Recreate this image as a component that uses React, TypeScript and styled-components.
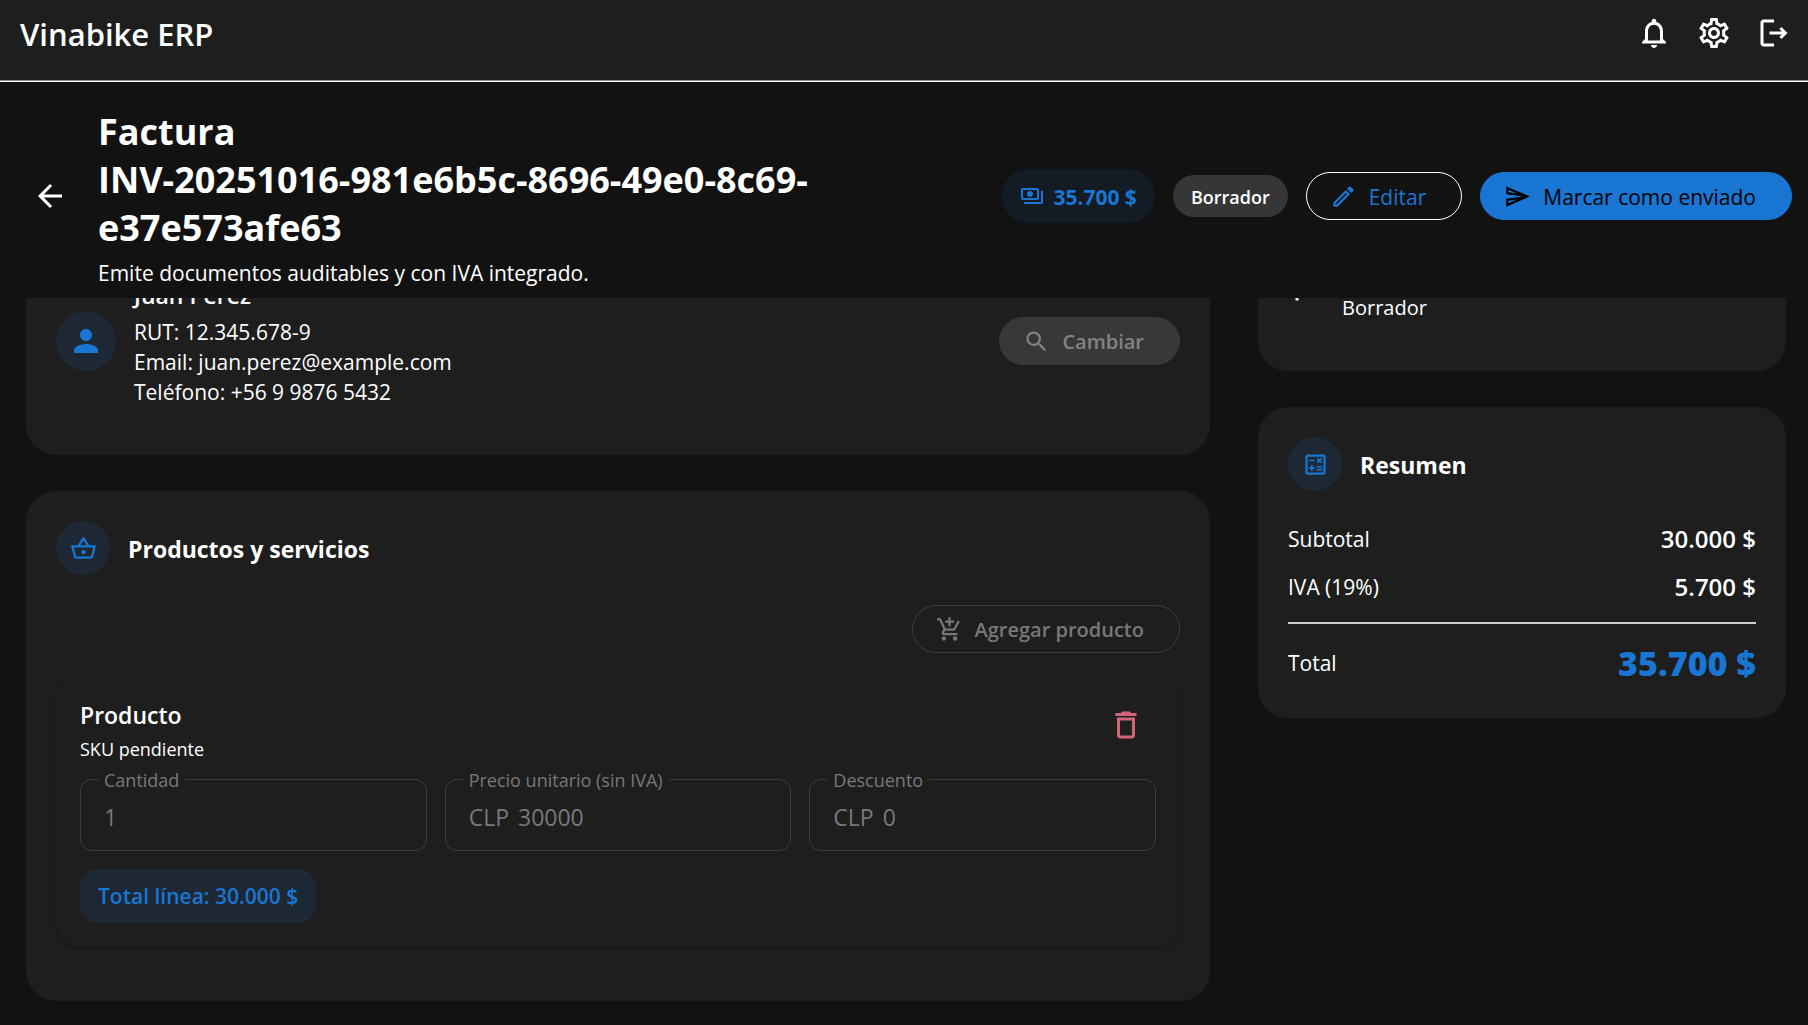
import React from "react";
import styled, { createGlobalStyle } from "styled-components";
import {
  MdArrowBack,
  MdDeleteOutline,
  MdNotificationsNone,
  MdOutlineAddShoppingCart,
  MdOutlineCalculate,
  MdOutlineEdit,
  MdOutlineFlag,
  MdOutlinePayments,
  MdOutlineSend,
  MdOutlineSettings,
  MdOutlineShoppingBasket,
  MdPerson,
  MdSearch,
} from "react-icons/md";

const color = {
  page: "#121212",
  surface: "#1e1e1e",
  primary: "#1976d2",
  tint: "rgba(25, 118, 210, 0.12)",
  text: "#ffffff",
  disabled: "#787878",
  disabledFill: "#383838",
  disabledLine: "#3e3e3e",
  danger: "#cf6679",
};

const GlobalStyle = createGlobalStyle`
  *, *::before, *::after { box-sizing: border-box; }
  body {
    margin: 0;
    background: ${color.page};
    color: ${color.text};
    font-family: "Open Sans", "Noto Sans", sans-serif;
    font-size: 21px;
    line-height: 30px;
  }
  button, input { font: inherit; }
  h1, h2, h3, p, dl, dt, dd { margin: 0; }
  svg { flex: none; display: block; }
`;

const Shell = styled.div`
  height: 100vh;
  display: flex;
  flex-direction: column;
  overflow: hidden;
`;

const AppBar = styled.header`
  flex: none;
  display: flex;
  align-items: flex-start;
  justify-content: space-between;
  padding: 3px 4px 15px 20px;
  background: ${color.surface};
  border-bottom: 1px solid ${color.text};
  box-shadow: inset 0 -1px 0 #8f8f8f;
`;

const Brand = styled.div`
  font-size: 31px;
  line-height: 63px;
  font-weight: 600;
`;

const Actions = styled.nav`
  display: flex;
`;

const IconButton = styled.button<{ $tone?: string }>`
  width: 60px;
  height: 60px;
  flex: none;
  display: grid;
  place-items: center;
  padding: 0;
  border: 0;
  border-radius: 50%;
  background: none;
  color: ${(p) => p.$tone ?? color.text};
  font-size: 36px;
  cursor: pointer;
`;

const PageHeader = styled.section`
  flex: none;
  display: flex;
  align-items: center;
  gap: 18px;
  padding: 22px 16px 10px 20px;
`;

const Heading = styled.div`
  flex: 1;
  min-width: 0;
  padding-top: 4px;
`;

const Title = styled.h1`
  font-size: 36px;
  line-height: 48px;
  font-weight: 700;
`;

const Subtitle = styled.p`
  margin-top: 6px;
`;

const AmountChip = styled.div`
  display: flex;
  align-items: center;
  gap: 9px;
  height: 54px;
  padding: 0 18px;
  border-radius: 27px;
  background: rgba(25, 118, 210, 0.1);
  color: ${color.primary};
  font-weight: 700;
  white-space: nowrap;
  svg { font-size: 24px; }
`;

const StatusChip = styled.div`
  height: 42px;
  padding: 0 18px;
  border-radius: 21px;
  background: #363636;
  font-size: 18px;
  line-height: 44px;
  font-weight: 600;
`;

const Pill = styled.button<{ $kind: "outlined" | "filled" | "tonal" | "ghost" }>`
  display: flex;
  align-items: center;
  gap: 12px;
  height: 48px;
  padding: 0 35px 0 23px;
  border: 1px solid transparent;
  border-radius: 24px;
  background: none;
  white-space: nowrap;
  svg { font-size: 27px; }
  ${(p) => p.$kind === "outlined" && `border-color: ${color.text}; color: ${color.primary}; font-weight: 500;`}
  ${(p) => p.$kind === "filled" && `background: ${color.primary}; border-color: ${color.primary}; color: #000000; font-weight: 500;`}
  ${(p) => p.$kind === "tonal" && `background: ${color.disabledFill}; border-color: ${color.disabledFill}; color: #838383; font-size: 20px; font-weight: 600;`}
  ${(p) => p.$kind === "ghost" && `border-color: ${color.disabledLine}; color: ${color.disabled}; font-size: 20px; font-weight: 600;`}
`;

const PillText = styled.span`
  padding-top: 2px;
`;

const Viewport = styled.main`
  flex: 1;
  min-height: 0;
  overflow: hidden;
`;

const Columns = styled.div`
  display: grid;
  grid-template-columns: minmax(0, 1fr) 528px;
  gap: 48px;
  align-items: start;
  margin-top: -83px;
  padding: 0 22px 24px 26px;
`;

const Column = styled.div`
  display: grid;
  gap: 36px;
`;

const Card = styled.section`
  padding: 30px;
  border-radius: 30px;
  background: ${color.surface};
`;

const CardHeader = styled.div`
  display: flex;
  align-items: center;
  gap: 18px;
`;

const CardTitle = styled.h2`
  padding-top: 2px;
  font-size: 23px;
  line-height: 36px;
  font-weight: 700;
`;

const Disc = styled.div<{ $size: number }>`
  width: ${(p) => p.$size}px;
  height: ${(p) => p.$size}px;
  flex: none;
  display: grid;
  place-items: center;
  border-radius: 50%;
  background: ${color.tint};
  color: ${color.primary};
  font-size: ${(p) => (p.$size > 54 ? 36 : 27)}px;
`;

const ClientRow = styled.div`
  display: flex;
  align-items: center;
  gap: 18px;
  padding: 30px 0 18px;
`;

const ClientInfo = styled.div`
  flex: 1;
`;

const ClientName = styled.h3`
  margin-bottom: 2px;
  font-size: 23px;
  line-height: 40px;
  font-weight: 600;
`;

const StateRow = styled.div`
  display: flex;
  align-items: flex-start;
  gap: 18px;
  padding: 24px 0 18px;
  svg { font-size: 36px; }
`;

const StateText = styled.p`
  padding-top: 24px;
  font-size: 20px;
`;

const Toolbar = styled.div`
  display: flex;
  justify-content: flex-end;
  margin: 30px 0 18px;
`;

const LineItem = styled.article`
  margin-bottom: 24px;
  padding: 24px;
  border-radius: 24px;
  background: ${color.surface};
  box-shadow: 0 2px 3px rgba(0, 0, 0, 0.24);
`;

const LineTop = styled.div`
  display: flex;
  justify-content: space-between;
`;

const LineName = styled.h3`
  font-size: 23px;
  line-height: 40px;
  font-weight: 600;
`;

const Sku = styled.p`
  font-size: 18px;
  line-height: 28px;
`;

const Fields = styled.div`
  display: grid;
  grid-template-columns: repeat(3, minmax(0, 1fr));
  gap: 18px;
  margin: 16px 0 18px;
`;

const FieldBox = styled.div`
  position: relative;
  display: flex;
  align-items: center;
  gap: 9px;
  height: 72px;
  padding: 4px 23px 0;
  border: 1px solid ${color.disabledLine};
  border-radius: 12px;
  color: ${color.disabled};
  font-size: 23px;
`;

const FieldLabel = styled.label`
  position: absolute;
  top: -14px;
  left: 17px;
  padding: 0 6px;
  background: ${color.surface};
  font-size: 18px;
  line-height: 28px;
`;

const FieldInput = styled.input`
  flex: 1;
  min-width: 0;
  padding: 0;
  border: 0;
  outline: 0;
  background: none;
  color: inherit;
`;

const LineTotal = styled.div`
  width: fit-content;
  padding: 12px 18px;
  border-radius: 18px;
  background: ${color.tint};
  color: ${color.primary};
  font-weight: 600;
`;

const Totals = styled.dl`
  margin-top: 24px;
`;

const TotalsRow = styled.div<{ $grand?: boolean }>`
  display: flex;
  align-items: center;
  justify-content: space-between;
  height: ${(p) => (p.$grand ? 66 : 48)}px;
  padding-top: ${(p) => (p.$grand ? 14 : 0)}px;
  margin-top: ${(p) => (p.$grand ? 11 : 0)}px;
  border-top: ${(p) => (p.$grand ? "2px solid #cccccc" : "0")};
  dd {
    font-size: ${(p) => (p.$grand ? 34 : 24)}px;
    font-weight: ${(p) => (p.$grand ? 800 : 600)};
    color: ${(p) => (p.$grand ? color.primary : color.text)};
  }
`;

function LogoutIcon() {
  return (
    <svg viewBox="0 0 24 24" width="1em" height="1em" fill="currentColor">
      <path d="M17 8l-1.41 1.41L17.17 11H9v2h8.17l-1.58 1.58L17 16l4-4-4-4z" />
      <path d="M5 5h7V3H5c-1.1 0-2 .9-2 2v14c0 1.1.9 2 2 2h7v-2H5V5z" />
    </svg>
  );
}

type FieldProps = { id: string; label: string; prefix?: string; value: string };

function Field({ id, label, prefix, value }: FieldProps) {
  return (
    <FieldBox>
      <FieldLabel htmlFor={id}>{label}</FieldLabel>
      {prefix && <span>{prefix}</span>}
      <FieldInput id={id} defaultValue={value} disabled />
    </FieldBox>
  );
}

export default function App() {
  return (
    <Shell>
      <GlobalStyle />
      <AppBar>
        <Brand>Vinabike ERP</Brand>
        <Actions>
          <IconButton type="button"><MdNotificationsNone /></IconButton>
          <IconButton type="button"><MdOutlineSettings /></IconButton>
          <IconButton type="button"><LogoutIcon /></IconButton>
        </Actions>
      </AppBar>

      <PageHeader>
        <IconButton type="button"><MdArrowBack /></IconButton>
        <Heading>
          <Title>
            Factura<br />
            INV-20251016-981e6b5c-8696-49e0-8c69-<br />
            e37e573afe63
          </Title>
          <Subtitle>Emite documentos auditables y con IVA integrado.</Subtitle>
        </Heading>
        <AmountChip><MdOutlinePayments /><PillText>35.700 $</PillText></AmountChip>
        <StatusChip>Borrador</StatusChip>
        <Pill type="button" $kind="outlined"><MdOutlineEdit /><PillText>Editar</PillText></Pill>
        <Pill type="button" $kind="filled"><MdOutlineSend /><PillText>Marcar como enviado</PillText></Pill>
      </PageHeader>

      <Viewport>
        <Columns>
          <Column>
            <Card>
              <ClientRow>
                <Disc $size={60}><MdPerson /></Disc>
                <ClientInfo>
                  <ClientName>Juan Perez</ClientName>
                  <p>RUT: 12.345.678-9</p>
                  <p>Email: juan.perez@example.com</p>
                  <p>Teléfono: +56 9 9876 5432</p>
                </ClientInfo>
                <Pill type="button" $kind="tonal" disabled><MdSearch /><PillText>Cambiar</PillText></Pill>
              </ClientRow>
            </Card>

            <Card>
              <CardHeader>
                <Disc $size={54}><MdOutlineShoppingBasket /></Disc>
                <CardTitle>Productos y servicios</CardTitle>
              </CardHeader>
              <Toolbar>
                <Pill type="button" $kind="ghost" disabled><MdOutlineAddShoppingCart /><PillText>Agregar producto</PillText></Pill>
              </Toolbar>
              <LineItem>
                <LineTop>
                  <div>
                    <LineName>Producto</LineName>
                    <Sku>SKU pendiente</Sku>
                  </div>
                  <IconButton type="button" $tone={color.danger}><MdDeleteOutline /></IconButton>
                </LineTop>
                <Fields>
                  <Field id="cantidad" label="Cantidad" value="1" />
                  <Field id="precio" label="Precio unitario (sin IVA)" prefix="CLP" value="30000" />
                  <Field id="descuento" label="Descuento" prefix="CLP" value="0" />
                </Fields>
                <LineTotal>Total línea: 30.000 $</LineTotal>
              </LineItem>
            </Card>
          </Column>

          <Column>
            <Card>
              <StateRow>
                <MdOutlineFlag />
                <StateText>Borrador</StateText>
              </StateRow>
            </Card>

            <Card>
              <CardHeader>
                <Disc $size={54}><MdOutlineCalculate /></Disc>
                <CardTitle>Resumen</CardTitle>
              </CardHeader>
              <Totals>
                <TotalsRow><dt>Subtotal</dt><dd>30.000 $</dd></TotalsRow>
                <TotalsRow><dt>IVA (19%)</dt><dd>5.700 $</dd></TotalsRow>
                <TotalsRow $grand><dt>Total</dt><dd>35.700 $</dd></TotalsRow>
              </Totals>
            </Card>
          </Column>
        </Columns>
      </Viewport>
    </Shell>
  );
}
